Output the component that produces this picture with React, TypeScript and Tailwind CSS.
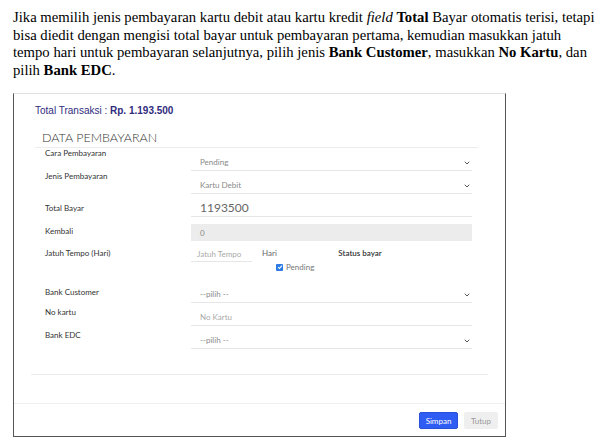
import { ChevronDown } from 'lucide-react'

const ui = { fontFamily: 'Lato, "Noto Sans", sans-serif' }

function Chevron() {
  return <ChevronDown className="w-[8px] h-[8px] text-[#555]" strokeWidth={3} />
}

function SelectField({ value }: { value: string }) {
  return (
    <div className="flex items-end justify-between w-[281px] h-[18px] border-b border-[#e6e6e6] pb-[3px] pl-[9px] pr-[1px]">
      <span className="text-[8px] leading-[10px] text-[#8a8a8a]">{value}</span>
      <Chevron />
    </div>
  )
}

export default function App() {
  return (
    <div className="w-[607px] h-[447px] bg-white overflow-hidden pt-[9px]">
      {/* Keterangan */}
      <p
        className="pl-[13px] text-[14.7px] leading-[17.5px] text-black whitespace-nowrap"
        style={{ fontFamily: '"Liberation Serif", serif' }}
      >
        Jika memilih jenis pembayaran kartu debit atau kartu kredit <i>field</i> <b>Total</b> Bayar otomatis terisi, tetapi
        <br />
        bisa diedit dengan mengisi total bayar untuk pembayaran pertama, kemudian masukkan jatuh
        <br />
        tempo hari untuk pembayaran selanjutnya, pilih jenis <b>Bank Customer</b>, masukkan <b>No Kartu</b>, dan
        <br />
        pilih <b>Bank EDC</b>.
      </p>

      {/* Modal pembayaran */}
      <div
        className="ml-[13px] mt-[14px] w-[493px] h-[344px] border-t border-t-[#e2e2e2] border-x border-b border-[#555] flex flex-col"
        style={ui}
      >
        <div className="h-[309px] pl-[21px] pr-[16px]">
          <div
            className="mt-[11px] text-[10px] leading-[12px] text-[#2f2c7c]"
            style={{ fontFamily: '"Liberation Sans", Arial, sans-serif' }}
          >
            Total Transaksi : <b>Rp. 1.193.500</b>
          </div>

          <div className="mt-[12px] h-[19px] border-b border-[#ececec] pl-[7px] mr-[11px] text-[12.5px] leading-[18px] font-light text-[#333]">
            DATA PEMBAYARAN
          </div>

          <div className="pl-[10px]">
            {/* Cara Pembayaran */}
            <div className="flex h-[23px]">
              <div className="w-[146px] text-[8px] leading-[10px] text-[#333]">Cara Pembayaran</div>
              <div className="mt-[5px]"><SelectField value="Pending" /></div>
            </div>

            {/* Jenis Pembayaran */}
            <div className="flex h-[23px]">
              <div className="w-[146px] text-[8px] leading-[10px] text-[#333]">Jenis Pembayaran</div>
              <div className="mt-[5px]"><SelectField value="Kartu Debit" /></div>
            </div>

            {/* Total Bayar */}
            <div className="flex h-[23px]">
              <div className="w-[146px] mt-[9px] text-[8px] leading-[10px] text-[#333]">Total Bayar</div>
              <div className="mt-[5px] w-[281px] h-[18px] border-b border-[#e6e6e6] pl-[9px] flex items-end pb-[1px]">
                <span className="text-[12px] leading-[14px] text-[#666]">1193500</span>
              </div>
            </div>

            {/* Kembali */}
            <div className="flex h-[24px]">
              <div className="w-[146px] mt-[9px] text-[8px] leading-[10px] text-[#333]">Kembali</div>
              <div className="mt-[7px] w-[281px] h-[17px] bg-[#ececec] pl-[9px] flex items-center">
                <span className="text-[8px] leading-[10px] text-[#888]">0</span>
              </div>
            </div>

            {/* Jatuh Tempo */}
            <div className="flex h-[44px]">
              <div className="w-[146px] mt-[7px] text-[8px] leading-[10px] text-[#333]">Jatuh Tempo (Hari)</div>
              <div className="flex">
                <div className="mt-[4px] w-[61px] h-[17px] border-b border-[#e6e6e6] pl-[6px] flex items-end pb-[2px]">
                  <span className="text-[8px] leading-[10px] text-[#aaa]">Jatuh Tempo</span>
                </div>
                <div className="ml-[10px] mt-[7px]">
                  <div className="text-[8px] leading-[10px] text-[#666]">Hari</div>
                  <div className="ml-[14px] mt-[4px] flex items-center gap-[3px]">
                    <span className="w-[7px] h-[7px] rounded-[1px] bg-[#2c7be5] flex items-center justify-center">
                      <svg width="6" height="6" viewBox="0 0 10 10">
                        <path d="M2 5.2 L4.2 7.4 L8.2 2.6" fill="none" stroke="white" strokeWidth="1.8" />
                      </svg>
                    </span>
                    <span className="text-[8px] leading-[10px] text-[#777]">Pending</span>
                  </div>
                </div>
                <div className="ml-[24px] mt-[7px] text-[8px] leading-[10px] font-semibold text-[#333]">Status bayar</div>
              </div>
            </div>

            {/* Bank Customer */}
            <div className="flex h-[18px]">
              <div className="w-[146px] mt-[2px] text-[8px] leading-[10px] text-[#333]">Bank Customer</div>
              <SelectField value="--pilih --" />
            </div>

            {/* No kartu */}
            <div className="flex h-[23px]">
              <div className="w-[146px] mt-[4px] text-[8px] leading-[10px] text-[#333]">No kartu</div>
              <div className="mt-[5px] w-[281px] h-[18px] border-b border-[#e6e6e6] pl-[9px] flex items-end pb-[3px]">
                <span className="text-[8px] leading-[10px] text-[#aaa]">No Kartu</span>
              </div>
            </div>

            {/* Bank EDC */}
            <div className="flex h-[23px]">
              <div className="w-[146px] mt-[4px] text-[8px] leading-[10px] text-[#333]">Bank EDC</div>
              <div className="mt-[5px]"><SelectField value="--pilih --" /></div>
            </div>
          </div>

          <div className="mt-[25px] -ml-[4px] mr-[1px] border-t border-[#ececec]" />
        </div>

        {/* Footer */}
        <div className="flex-1 border-t border-[#efefef] flex justify-end items-start pt-[8px] pr-[7px] gap-[6px]">
          <button className="w-[39px] h-[17px] rounded-[2px] bg-[#2f5cf2] border border-[#2a4fd8] text-white text-[8px] leading-[10px]">
            Simpan
          </button>
          <button className="w-[34px] h-[17px] rounded-[2px] bg-[#efefef] text-[#999] text-[8px] leading-[10px]">
            Tutup
          </button>
        </div>
      </div>
    </div>
  )
}
